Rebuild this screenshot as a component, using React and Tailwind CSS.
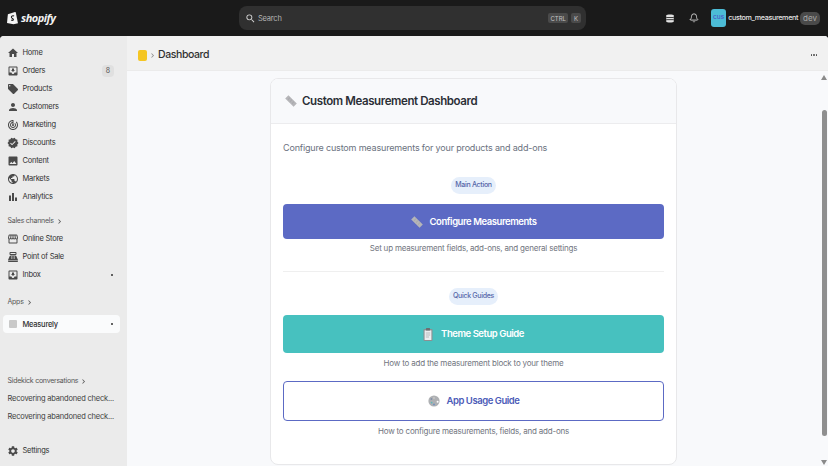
import React from "react";
import {
  MdHome,
  MdMoveToInbox,
  MdLocalOffer,
  MdPerson,
  MdTrackChanges,
  MdVerified,
  MdImage,
  MdPublic,
  MdBarChart,
  MdStorefront,
  MdPointOfSale,
  MdSettings,
  MdSearch,
  MdChevronRight,
} from "react-icons/md";
import { Bell } from "lucide-react";

const mainNav = [
  { label: "Home", Icon: MdHome },
  { label: "Orders", Icon: MdMoveToInbox, badge: "8" },
  { label: "Products", Icon: MdLocalOffer },
  { label: "Customers", Icon: MdPerson },
  { label: "Marketing", Icon: MdTrackChanges },
  { label: "Discounts", Icon: MdVerified },
  { label: "Content", Icon: MdImage },
  { label: "Markets", Icon: MdPublic },
  { label: "Analytics", Icon: MdBarChart },
];

const channelNav = [
  { label: "Online Store", Icon: MdStorefront },
  { label: "Point of Sale", Icon: MdPointOfSale },
  { label: "Inbox", Icon: MdMoveToInbox, dot: true },
];

function NavItem({ label, Icon, badge, dot }) {
  return (
    <div className="flex h-[18px] items-center pl-[4px] pr-[6px]">
      <Icon className="h-[12px] w-[12px] shrink-0 text-[#4a4a4a]" />
      <span className="ml-[3.5px] flex-1 text-[7.5px] tracking-[-0.25px] text-[#303030]">{label}</span>
      {badge && (
        <span className="flex h-[12px] w-[12px] items-center justify-center rounded-[4px] bg-[#e0e0e0] text-[7px] text-[#555]">
          {badge}
        </span>
      )}
      {dot && <span className="mr-[1px] h-[2px] w-[2px] rounded-full bg-[#303030]" />}
    </div>
  );
}

function SectionLabel({ children }) {
  return (
    <div className="flex h-[18px] items-center pl-[4.5px] text-[7px] tracking-[-0.25px] text-[#555]">
      {children}
      <MdChevronRight className="ml-[1px] h-[9px] w-[9px]" />
    </div>
  );
}

function RulerIcon({ className }) {
  return (
    <svg viewBox="0 0 12 12" className={className}>
      <path d="M3.4 0.2 L11.8 8.6 L8.6 11.8 L0.2 3.4 Z" fill="#b5b5b8" />
      <path d="M4.6 3 l-1.2 1.2 M6.6 5 l-1.2 1.2 M8.6 7 l-1.2 1.2" stroke="#8a8a8e" strokeWidth="0.6" />
    </svg>
  );
}

function Pill({ children }) {
  return (
    <div className="flex justify-center">
      <span className="flex h-[17px] items-center rounded-full bg-[#e6effb] px-[4px] text-[7px] font-medium tracking-[-0.3px] text-[#5566a8]">
        {children}
      </span>
    </div>
  );
}

function Caption({ children }) {
  return <p className="text-center text-[8px] leading-[10px] tracking-[-0.2px] text-[#71757e]">{children}</p>;
}

export default function App() {
  return (
    <div
      className="flex h-[466px] w-[828px] flex-col overflow-hidden bg-[#1a1a1a]"
      style={{ fontFamily: "Inter, 'Noto Sans', sans-serif" }}
    >
      {/* top bar */}
      <header className="flex h-[36px] shrink-0 items-center pl-[7px] pr-[8px]">
        <div className="flex w-[232px] items-center">
          <svg viewBox="0 0 14 16" className="h-[16px] w-[12px]">
            <path d="M1 3.6 L9.3 1.1 L10.2 1.4 L12.8 14 L7.6 15.3 L0 13.8 Z" fill="#f4f4f4" />
            <path d="M8.3 5.6 C6.6 5 5 5.7 5.1 7.2 C5.2 8.7 7.5 8.6 7.5 10 C7.5 10.9 6.2 11 4.8 10.3" fill="none" stroke="#1a1a1a" strokeWidth="1.2" />
          </svg>
          <span
            className="ml-[2px] text-[11px] font-bold italic tracking-[-0.5px] text-[#f2f2f2]"
            style={{ fontFamily: "'Open Sans', sans-serif" }}
          >
            shopify
          </span>
        </div>
        <div className="flex h-[24px] w-[347px] items-center rounded-[8px] bg-[#303030] pl-[6px] pr-[5px]">
          <MdSearch className="h-[11px] w-[11px] text-[#d8d8d8]" />
          <span className="ml-[2px] flex-1 pt-[1px] text-[7.5px] tracking-[-0.2px] text-[#b5b5b5]">Search</span>
          <span className="flex h-[10px] items-center rounded-[2px] bg-[#4a4a4a] px-[2px] text-[6px] text-[#c4c4c4]">CTRL</span>
          <span className="ml-[3px] flex h-[10px] w-[10px] items-center justify-center rounded-[2px] bg-[#4a4a4a] text-[6px] text-[#c4c4c4]">K</span>
        </div>
        <div className="ml-auto flex items-center">
          <svg viewBox="0 0 12 12" className="h-[11px] w-[10px]">
            <path d="M1.5 2.5 C1.5 0.8 10.5 0.8 10.5 2.5 V9.5 C10.5 11.2 1.5 11.2 1.5 9.5 Z" fill="#e3e3e3" />
            <path d="M1.5 4.8 H10.5 M1.5 7.4 H10.5" stroke="#1a1a1a" strokeWidth="1" />
          </svg>
          <Bell className="ml-[14px] h-[10px] w-[10px] text-[#e3e3e3]" strokeWidth={2} />
          <span className="ml-[12px] flex h-[18px] w-[15px] items-center justify-center rounded-[3px] bg-[#4cbcd6] text-[6.5px] font-medium text-[#4b55c8]">
            cus
          </span>
          <span className="ml-[2px] text-[7.2px] font-medium tracking-[-0.35px] text-[#e3e3e3]">custom_measurement</span>
          <span className="ml-[2px] flex h-[13px] items-center rounded-[5px] bg-[#4a4a4a] px-[3px] text-[8px] text-[#a8a8a8]">dev</span>
        </div>
      </header>

      <div className="flex min-h-0 flex-1 overflow-hidden rounded-t-[4px] bg-[#ebebeb]">
        {/* sidebar */}
        <aside className="flex w-[127px] shrink-0 flex-col bg-[#ebebeb] pl-[3px] pr-[7px] pt-[8px]">
          {mainNav.map((item) => (
            <NavItem key={item.label} {...item} />
          ))}
          <div className="mt-[6px]">
            <SectionLabel>Sales channels</SectionLabel>
          </div>
          {channelNav.map((item) => (
            <NavItem key={item.label} {...item} />
          ))}
          <div className="mt-[9px]">
            <SectionLabel>Apps</SectionLabel>
          </div>
          <div className="mt-[4px] flex h-[18px] items-center rounded-[4px] bg-[#fafbfc] pl-[6px] pr-[6px]">
            <span className="h-[8px] w-[8px] rounded-[1px] bg-[#c9c9c9]" />
            <span className="ml-[5.5px] flex-1 pt-[1px] text-[7.5px] font-medium tracking-[-0.25px] text-[#303030]">Measurely</span>
            <span className="mr-[1px] h-[2px] w-[2px] rounded-full bg-[#303030]" />
          </div>
          <div className="mt-[39px]">
            <SectionLabel>Sidekick conversations</SectionLabel>
          </div>
          <div className="flex h-[18px] items-center whitespace-nowrap pl-[4.5px] text-[7.5px] tracking-[-0.2px] text-[#404040]">Recovering abandoned check...</div>
          <div className="flex h-[18px] items-center whitespace-nowrap pl-[4.5px] text-[7.5px] tracking-[-0.2px] text-[#404040]">Recovering abandoned check...</div>
          <div className="mt-[16px]">
            <NavItem label="Settings" Icon={MdSettings} />
          </div>
        </aside>

        {/* main */}
        <main className="flex min-w-0 flex-1 flex-col bg-[#f8f9fb]">
          <div className="flex h-[35px] shrink-0 items-center border-b border-[#ebebeb] bg-[#f1f1f1] pl-[11px] pr-[11px] pt-[4px]">
            <span className="h-[11px] w-[9px] rounded-[2px] bg-[#f5c623]" />
            <MdChevronRight className="ml-[1px] h-[9px] w-[9px] text-[#8a8a8a]" />
            <span className="ml-[1px] text-[10.5px] font-medium tracking-[-0.4px] text-[#303030]">Dashboard</span>
            <span className="ml-auto flex gap-[1px]">
              <span className="h-[1.5px] w-[1.5px] rounded-full bg-[#4a4a4a]" />
              <span className="h-[1.5px] w-[1.5px] rounded-full bg-[#4a4a4a]" />
              <span className="h-[1.5px] w-[1.5px] rounded-full bg-[#4a4a4a]" />
            </span>
          </div>

          <div className="flex min-h-0 flex-1">
            <div className="flex min-w-0 flex-1 justify-center pt-[7px]">
              <section className="h-[387px] w-[407px] overflow-hidden rounded-[8px] border border-[#e8e8ea] bg-white">
                <div className="flex h-[45px] items-center border-b border-[#ececee] bg-[#f8f9fb] pl-[14px]">
                  <RulerIcon className="h-[12px] w-[12px]" />
                  <h1 className="ml-[5px] pt-[1px] text-[11.5px] font-semibold tracking-[-0.4px] text-[#2b2f36]">Custom Measurement Dashboard</h1>
                </div>
                <div className="px-[12px]">
                  <p className="mt-[18px] text-[9px] leading-[12px] tracking-[-0.17px] text-[#6b7280]">
                    Configure custom measurements for your products and add-ons
                  </p>
                  <div className="mt-[23px]">
                    <Pill>Main Action</Pill>
                  </div>
                  <button className="mt-[10px] flex h-[35px] w-full items-center justify-center rounded-[4px] bg-[#5c6ac4] pt-[1px] text-[9.5px] font-semibold tracking-[-0.45px] text-white">
                    <RulerIcon className="mr-[7px] h-[12px] w-[12px]" />
                    Configure Measurements
                  </button>
                  <div className="mt-[4px]">
                    <Caption>Set up measurement fields, add-ons, and general settings</Caption>
                  </div>
                  <hr className="mt-[18px] border-[#efefef]" />
                  <div className="mt-[16px]">
                    <Pill>Quick Guides</Pill>
                  </div>
                  <button className="mt-[10px] flex h-[38px] w-full items-center justify-center rounded-[4px] bg-[#47c1bf] pt-[1px] text-[9.5px] font-semibold tracking-[-0.45px] text-white">
                    <svg viewBox="0 0 10 13" className="mr-[8px] h-[13px] w-[10px]">
                      <rect x="0.5" y="1" width="9" height="12" rx="1" fill="#8d8f92" />
                      <rect x="1.6" y="2.4" width="6.8" height="9.6" fill="#eceef0" />
                      <rect x="3" y="0" width="4" height="2.4" rx="0.5" fill="#6d6f72" />
                      <path d="M2.8 5 H7.2 M2.8 7 H7.2 M2.8 9 H6" stroke="#a5a7aa" strokeWidth="0.7" />
                    </svg>
                    Theme Setup Guide
                  </button>
                  <div className="mt-[5px]">
                    <Caption>How to add the measurement block to your theme</Caption>
                  </div>
                  <button className="mt-[13px] flex h-[40px] w-full items-center justify-center rounded-[4px] border border-[#5c6ac4] bg-white text-[9.5px] font-semibold tracking-[-0.45px] text-[#4c5bb8]">
                    <svg viewBox="0 0 12 12" className="mr-[7px] h-[12px] w-[12px]">
                      <circle cx="6" cy="6" r="5.6" fill="#aeb0b3" />
                      <circle cx="9.6" cy="6.8" r="1" fill="#fff" />
                      <circle cx="3.4" cy="4" r="0.9" fill="#7f8ea8" />
                      <circle cx="6" cy="3" r="0.9" fill="#c8c8c8" />
                      <circle cx="3.6" cy="7.6" r="0.9" fill="#5fb8b8" />
                      <circle cx="6" cy="9.4" r="0.9" fill="#6c8fc0" />
                    </svg>
                    App Usage Guide
                  </button>
                  <div className="mt-[5px]">
                    <Caption>How to configure measurements, fields, and add-ons</Caption>
                  </div>
                </div>
              </section>
            </div>

            {/* scrollbar */}
            <div className="flex w-[8px] shrink-0 flex-col items-center bg-[#f8f9fb] pt-[4px]">
              <span className="h-0 w-0 border-x-[3px] border-b-[5px] border-x-transparent border-b-[#8a8a8a]" />
              <span className="mt-[30px] h-[326px] w-[5px] rounded-[3px] bg-[#8f8f8f]" />
              <span className="mt-auto mb-[1px] h-0 w-0 border-x-[3px] border-t-[5px] border-x-transparent border-t-[#8a8a8a]" />
            </div>
          </div>
        </main>
      </div>
    </div>
  );
}
